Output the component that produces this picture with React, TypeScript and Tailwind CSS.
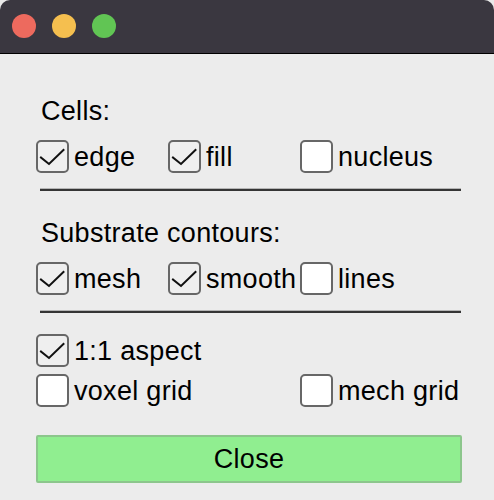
import { useState } from "react";

const font = { fontFamily: '"Liberation Sans", Arial, sans-serif' };

function Check({ label, checked, onToggle }: { label: string; checked: boolean; onToggle: () => void }) {
	return (
		<button type="button" onClick={onToggle} className="flex items-center h-[33px] gap-[5px] text-left">
			<span
				className={`w-[33px] h-[33px] rounded-[5px] border-2 border-[#676767] flex-shrink-0 ${checked ? "bg-[#efefef]" : "bg-white"}`}
			>
				{checked && (
					<svg width="29" height="29" viewBox="0 0 29 29" fill="none">
						<path d="M3 15.5 L11 22 L25.5 8" stroke="#111" strokeWidth="2" strokeLinecap="square" strokeLinejoin="miter" />
					</svg>
				)}
			</span>
			<span className="text-[27px] tracking-[0.3px] leading-[30px] text-black whitespace-nowrap">{label}</span>
		</button>
	);
}

function Divider() {
	return (
		<div className="ml-[4px] w-[421px]">
			<div className="h-[1px] bg-[#b5b5b5]" />
			<div className="h-[2px] bg-[#353535]" />
		</div>
	);
}

export default function App() {
	const [opts, setOpts] = useState<Record<string, boolean>>({
		edge: true,
		fill: true,
		nucleus: false,
		mesh: true,
		smooth: true,
		lines: false,
		aspect: true,
		voxel: false,
		mech: false,
	});
	const toggle = (k: string) => setOpts(o => ({ ...o, [k]: !o[k] }));

	return (
		<div className="w-[494px] h-[500px] bg-[#e9e9e9] overflow-hidden" style={font}>
			{/* title bar */}
			<div className="h-[54px] bg-[#3a3740] rounded-t-[10px] border-b border-black flex items-center gap-[16px] pl-[12px] pb-[2px]">
				<span className="w-[24px] h-[24px] rounded-full bg-[#ed6a5e]" />
				<span className="w-[24px] h-[24px] rounded-full bg-[#f5bf4f]" />
				<span className="w-[24px] h-[24px] rounded-full bg-[#61c554]" />
			</div>

			<div className="bg-[#ececec] h-[446px] pl-[36px] pt-[42px] flex flex-col">
				<div className="pl-[5px] text-[27px] tracking-[0.3px] leading-[30px] text-black">Cells:</div>
				<div className="grid grid-cols-[132px_132px_132px] mt-[14px]">
					<Check label="edge" checked={opts.edge} onToggle={() => toggle("edge")} />
					<Check label="fill" checked={opts.fill} onToggle={() => toggle("fill")} />
					<Check label="nucleus" checked={opts.nucleus} onToggle={() => toggle("nucleus")} />
				</div>
				<div className="mt-[15px]">
					<Divider />
				</div>

				<div className="pl-[5px] mt-[27px] text-[27px] tracking-[0.3px] leading-[30px] text-black">Substrate contours:</div>
				<div className="grid grid-cols-[132px_132px_132px] mt-[14px]">
					<Check label="mesh" checked={opts.mesh} onToggle={() => toggle("mesh")} />
					<Check label="smooth" checked={opts.smooth} onToggle={() => toggle("smooth")} />
					<Check label="lines" checked={opts.lines} onToggle={() => toggle("lines")} />
				</div>
				<div className="mt-[15px]">
					<Divider />
				</div>

				<div className="mt-[21px]">
					<Check label="1:1 aspect" checked={opts.aspect} onToggle={() => toggle("aspect")} />
				</div>
				<div className="grid grid-cols-[264px_132px] mt-[7px]">
					<Check label="voxel grid" checked={opts.voxel} onToggle={() => toggle("voxel")} />
					<Check label="mech grid" checked={opts.mech} onToggle={() => toggle("mech")} />
				</div>

				<button
					type="button"
					className="mt-[28px] w-[426px] h-[48px] bg-[#90ee90] border-2 border-[#8cc68c] rounded-[2px] text-[27px] tracking-[0.3px] leading-[30px] text-black"
				>
					Close
				</button>
			</div>
		</div>
	);
}
